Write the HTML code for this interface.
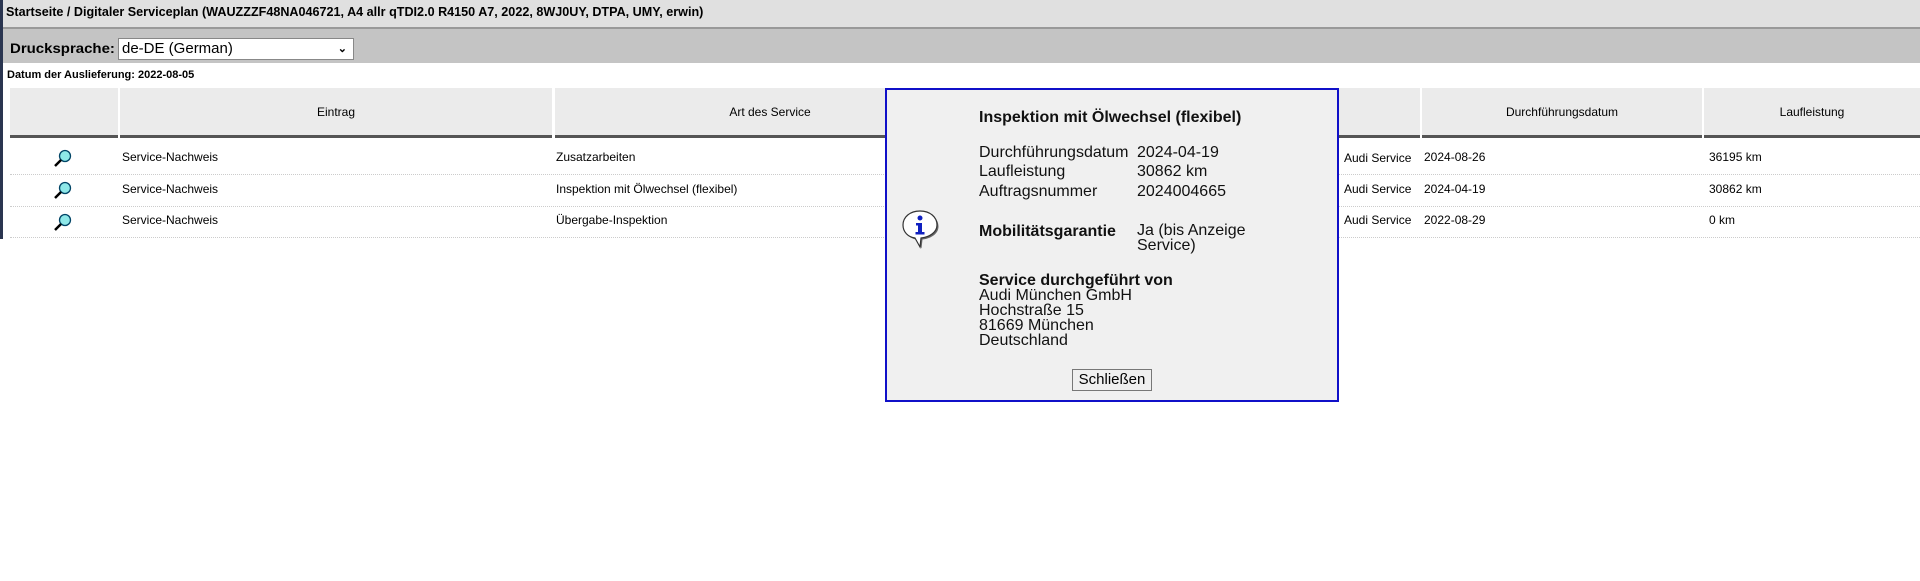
<!DOCTYPE html>
<html><head><meta charset="utf-8"><style>
body{margin:0;width:1920px;height:581px;background:#fff;font-family:"Liberation Sans",Arial,sans-serif;position:relative;overflow:hidden}
.a{position:absolute}
.t{font-size:12px;color:#000}
.hd{position:absolute;top:88px;height:47px;background:#ebebeb;border-bottom:3px solid #555;font-size:12px;display:flex;align-items:center;justify-content:center}
.sep{position:absolute;left:10px;right:0;border-top:1px dotted #ccc}
.mag{position:absolute;left:52px}
.pl{position:absolute;font-size:16px;color:#111;line-height:18px}
</style></head><body>
<div class="a" style="left:0;top:0;width:1920px;height:27px;background:#e0e0e0;border-bottom:2px solid #999"></div>
<div class="a t" style="left:6px;top:5px;font-size:12.6px;font-weight:bold">Startseite / Digitaler Serviceplan (WAUZZZF48NA046721, A4 allr qTDI2.0 R4150 A7, 2022, 8WJ0UY, DTPA, UMY, erwin)</div>
<div class="a" style="left:0;top:29px;width:1920px;height:34px;background:#c4c4c4"></div>
<div class="a" style="left:10px;top:40px;font-size:14px;font-weight:bold;transform:scaleX(1.07);transform-origin:left">Drucksprache:</div>
<div class="a" style="left:118px;top:38px;width:231px;height:20px;background:#fff;border:1px solid #888;font-size:15px;line-height:20px;padding-left:3px">de-DE (German)<span style="position:absolute;right:6px;top:0;font-size:11px;font-weight:bold">&#x2304;</span></div>
<div class="a" style="left:0;top:0;width:3px;height:239px;background:#2a3550"></div>
<div class="a t" style="left:7px;top:69px;font-size:11px;font-weight:bold">Datum der Auslieferung: 2022-08-05</div>
<div class="hd" style="left:10px;width:108px"></div>
<div class="hd" style="left:120px;width:432px">Eintrag</div>
<div class="hd" style="left:555px;width:430px">Art des Service</div>
<div class="hd" style="left:987px;width:433px"></div>
<div class="hd" style="left:1422px;width:280px">Durchführungsdatum</div>
<div class="hd" style="left:1704px;width:216px">Laufleistung</div>
<div class="sep" style="top:174px"></div><div class="sep" style="top:206px"></div><div class="sep" style="top:237px"></div>
<svg class="mag" style="top:149px" width="20" height="20"><circle cx="13" cy="7" r="5.5" fill="#8ee8e8" stroke="#046" stroke-width="1.3"/><line x1="9" y1="11" x2="3" y2="17" stroke="#000" stroke-width="2.5"/></svg>
<svg class="mag" style="top:181px" width="20" height="20"><circle cx="13" cy="7" r="5.5" fill="#8ee8e8" stroke="#046" stroke-width="1.3"/><line x1="9" y1="11" x2="3" y2="17" stroke="#000" stroke-width="2.5"/></svg>
<svg class="mag" style="top:213px" width="20" height="20"><circle cx="13" cy="7" r="5.5" fill="#8ee8e8" stroke="#046" stroke-width="1.3"/><line x1="9" y1="11" x2="3" y2="17" stroke="#000" stroke-width="2.5"/></svg>
<div class="a t" style="left:122px;top:150px">Service-Nachweis</div>
<div class="a t" style="left:122px;top:182px">Service-Nachweis</div>
<div class="a t" style="left:122px;top:213px">Service-Nachweis</div>
<div class="a t" style="left:556px;top:150px">Zusatzarbeiten</div>
<div class="a t" style="left:556px;top:182px">Inspektion mit Ölwechsel (flexibel)</div>
<div class="a t" style="left:556px;top:213px">Übergabe-Inspektion</div>
<div class="a t" style="left:1344px;top:151px">Audi Service</div>
<div class="a t" style="left:1344px;top:182px">Audi Service</div>
<div class="a t" style="left:1344px;top:213px">Audi Service</div>
<div class="a t" style="left:1424px;top:150px">2024-08-26</div>
<div class="a t" style="left:1424px;top:182px">2024-04-19</div>
<div class="a t" style="left:1424px;top:213px">2022-08-29</div>
<div class="a t" style="left:1709px;top:150px">36195 km</div>
<div class="a t" style="left:1709px;top:182px">30862 km</div>
<div class="a t" style="left:1709px;top:213px">0 km</div>
<div class="a" style="left:885px;top:88px;width:450px;height:310px;background:#f0f0f0;border:2px solid #1010c8"></div>
<div class="pl" style="left:979px;top:109px;font-weight:bold">Inspektion mit Ölwechsel (flexibel)</div>
<div class="pl" style="left:979px;top:144px">Durchführungsdatum</div><div class="pl" style="left:1137px;top:144px">2024-04-19</div>
<div class="pl" style="left:979px;top:163px">Laufleistung</div><div class="pl" style="left:1137px;top:163px">30862 km</div>
<div class="pl" style="left:979px;top:183px">Auftragsnummer</div><div class="pl" style="left:1137px;top:183px">2024004665</div>
<div class="pl" style="left:979px;top:223px;font-weight:bold">Mobilitätsgarantie</div>
<div class="pl" style="left:1137px;top:223px;line-height:15px">Ja (bis Anzeige<br>Service)</div>
<div class="pl" style="left:979px;top:273px;line-height:15px"><b>Service durchgeführt von</b><br>Audi München GmbH<br>Hochstraße 15<br>81669 München<br>Deutschland</div>
<div class="a" style="left:1072px;top:369px;width:78px;height:20px;border:1px solid #777;background:#efefef;font-size:15px;text-align:center;line-height:20px">Schließen</div>
<svg class="a" style="left:900px;top:208px" width="42" height="42"><path d="M20 3C10 3 3 9 3 17c0 7 5 12 12 13l5 9 1-9c9-1 16-6 16-13 0-8-7-14-17-14z" fill="#666" transform="translate(1.5,1.5)"/><path d="M20 3C10 3 3 9 3 17c0 7 5 12 12 13l5 9 1-9c9-1 16-6 16-13 0-8-7-14-17-14z" fill="#fff" stroke="#333" stroke-width="1.2"/><circle cx="20" cy="10" r="2.5" fill="#1020c0"/><path d="M16 15h6v9h2.5v2.5h-9V24h2.5v-6.5H16z" fill="#1020c0"/></svg>
</body></html>
